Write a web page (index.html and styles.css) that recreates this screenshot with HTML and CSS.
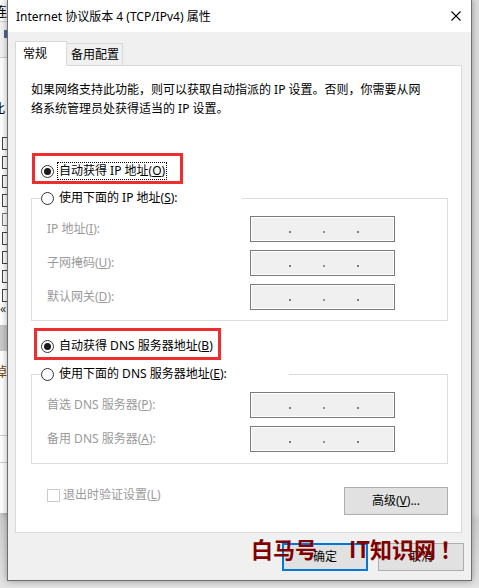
FILE: index.html
```html
<!DOCTYPE html>
<html lang="zh-CN">
<head>
<meta charset="utf-8">
<title>Internet 协议版本 4 (TCP/IPv4) 属性</title>
<link rel="stylesheet" href="styles.css">
</head>
<body>
<div class="bgwin">
  <div class="bg-head">连</div>
  <div class="bg-tool"><span class="bg-mark"></span></div>
  <div class="bg-text">此</div>
  <ul class="bg-list">
    <li></li><li></li><li></li><li></li><li class="empty"></li><li></li><li></li><li></li><li></li>
  </ul>
  <div class="bg-arrow">«</div>
  <div class="bg-block"></div>
  <div class="bg-glyph">掉</div>
  <div class="bg-line"></div>
  <div class="bg-line"></div>
</div>

<div class="dialog">
  <div class="titlebar">
    <span class="title">Internet 协议版本 4 (TCP/IPv4) 属性</span>
    <svg class="close" width="10" height="10" viewBox="0 0 10 10"><path d="M0.5 0.5 L9.5 9.5 M9.5 0.5 L0.5 9.5" stroke="#000" stroke-width="1.1" fill="none"/></svg>
  </div>
  <div class="body">
    <div class="tabs">
      <div class="tab active">常规</div>
      <div class="tab inactive">备用配置</div>
    </div>
    <div class="panel">
      <p class="desc">如果网络支持此功能，则可以获取自动指派的 IP 设置。否则，你需要从网<br>络系统管理员处获得适当的 IP 设置。</p>

      <div class="opt opt-first">
        <span class="radio checked"></span><span class="lbl focus">自动获得 IP 地址(<u>O</u>)</span>
        <span class="mark mark-ip"></span>
      </div>

      <fieldset class="group group-ip">
        <legend class="opt legend-ip"><span class="radio"></span><span class="lbl">使用下面的 IP 地址(<u>S</u>):</span></legend>
        <div class="rows">
          <div class="row"><span class="flabel">IP 地址(<u>I</u>):</span><span class="ipbox"><i></i><i></i><i></i></span></div>
          <div class="row"><span class="flabel">子网掩码(<u>U</u>):</span><span class="ipbox"><i></i><i></i><i></i></span></div>
          <div class="row"><span class="flabel">默认网关(<u>D</u>):</span><span class="ipbox"><i></i><i></i><i></i></span></div>
        </div>
      </fieldset>

      <div class="opt opt-dns">
        <span class="radio checked"></span><span class="lbl">自动获得 DNS 服务器地址(<u>B</u>)</span>
        <span class="mark mark-dns"></span>
      </div>

      <fieldset class="group group-dns">
        <legend class="opt legend-dns"><span class="radio"></span><span class="lbl">使用下面的 DNS 服务器地址(<u>E</u>):</span></legend>
        <div class="rows">
          <div class="row"><span class="flabel">首选 DNS 服务器(<u>P</u>):</span><span class="ipbox"><i></i><i></i><i></i></span></div>
          <div class="row"><span class="flabel">备用 DNS 服务器(<u>A</u>):</span><span class="ipbox"><i></i><i></i><i></i></span></div>
        </div>
      </fieldset>

      <div class="bottom">
        <label class="check"><span class="box"></span><span class="clbl">退出时验证设置(<u>L</u>)</span></label>
        <button class="btn adv">高级(<u>V</u>)...</button>
      </div>
    </div>
    <div class="actions">
      <button class="btn default">确定</button>
      <button class="btn">取消</button>
    </div>
  </div>
</div>

<div class="watermark"><span>白马号</span><span>IT知识网<span class="excl">！</span></span></div>
</body>
</html>
```

FILE: styles.css
```css
* { box-sizing: border-box; }

html, body {
  margin: 0;
  padding: 0;
}

body {
  width: 479px;
  height: 588px;
  position: relative;
  overflow: hidden;
  background: linear-gradient(to bottom, #dcdcdc 0, #dcdcdc 513px, #d0d0d0 520px, #e4e4e4 588px);
  font-family: "Noto Sans", "Noto Sans CJK SC", sans-serif;
  font-size: 12px;
  color: #000;
}

/* background window peeking on the left */
.bgwin {
  position: absolute;
  left: 0;
  top: 0;
  width: 60px;
  height: 513px;
  background: #fff;
  box-shadow: 0 2px 6px rgba(0,0,0,0.25);
  display: flex;
  flex-direction: column;
}
.bg-head {
  height: 22px;
  line-height: 22px;
  font-size: 13px;
  margin-left: -6px;
  border-bottom: 1px solid #d0d0d0;
  background: #fafafa;
}
.bg-tool {
  height: 36px;
  border-bottom: 1px solid #d0d0d0;
  background: #f3f3f3;
  padding-top: 8px;
}
.bg-mark {
  display: block;
  width: 3px;
  height: 8px;
  margin-left: 4px;
  background: #4a6a9a;
}
.bg-text {
  margin-top: 42px;
  margin-left: -8px;
  font-size: 13px;
  line-height: 16px;
}
.bg-list {
  list-style: none;
  margin: 21px 0 0 0;
  padding: 0;
  display: flex;
  flex-direction: column;
  gap: 6px;
}
.bg-list li {
  width: 8px;
  height: 13px;
  margin-left: 2px;
  border: 1px solid #444;
  border-right-width: 2px;
  background: #fff;
}
.bg-list li.empty { border-color: #777; }
.bg-arrow {
  font-size: 12px;
  line-height: 12px;
  margin-top: 1px;
  color: #333;
}
.bg-block {
  height: 26px;
  margin-top: 10px;
  background: #c9c9c9;
}
.bg-glyph {
  margin-top: 12px;
  margin-left: -6px;
  font-size: 13px;
  line-height: 16px;
  color: #7a4a10;
}
.bg-line {
  margin-top: 56px;
  border-top: 1px solid #cfcfcf;
}
.bg-line + .bg-line { margin-top: 26px; }

/* dialog window */
.dialog {
  position: absolute;
  left: 7px;
  top: -1px;
  width: 465px;
  height: 582px;
  border: 1px solid #6e6e6e;
  background: #f0f0f0;
  box-shadow: 0 0 7px rgba(0,0,0,0.35);
  display: flex;
  flex-direction: column;
}

.titlebar {
  height: 32px;
  padding-top: 1px;
  background: #fff;
  display: flex;
  align-items: center;
  justify-content: space-between;
  padding-left: 8px;
  padding-right: 10px;
}
.title {
  line-height: 31px;
}
.close { display: block; margin-top: -2px; }

.body {
  flex: 1;
  background: #f0f0f0;
  padding: 9px 9px 0 7px;
  display: flex;
  flex-direction: column;
}

.tabs {
  display: flex;
  height: 25px;
  margin-bottom: -1px;
  position: relative;
  z-index: 1;
}
.tab {
  border: 1px solid #d9d9d9;
  border-bottom: none;
  line-height: 22px;
}
.tab.active {
  width: 52px;
  height: 25px;
  background: #fff;
  padding-left: 7px;
  line-height: 23px;
}
.tab.inactive {
  width: 57px;
  height: 22px;
  margin-top: 2px;
  margin-left: -1px;
  background: #f0f0f0;
  padding-left: 4px;
}

.panel {
  width: 447px;
  height: 468px;
  border: 1px solid #d9d9d9;
  background: #fff;
  padding: 14px 13px 0 15px;
  display: flex;
  flex-direction: column;
}

.desc {
  margin: 0;
  line-height: 19px;
  height: 38px;
  white-space: nowrap;
}

.opt {
  display: flex;
  align-items: center;
  height: 20px;
  position: relative;
}
.opt-first { margin-top: 43px; padding-left: 10px; }
.opt-dns { margin-top: 15px; padding-left: 10px; }

.radio {
  width: 13px;
  height: 13px;
  border: 1px solid #333;
  border-radius: 50%;
  background: #fff;
  display: flex;
  align-items: center;
  justify-content: center;
  flex: none;
}
.radio.checked::after {
  content: "";
  width: 7px;
  height: 7px;
  border-radius: 50%;
  background: #1a1a1a;
}
.lbl {
  margin-left: 3px;
  padding: 0 1px;
  border: 1px dotted transparent;
  line-height: 16px;
  white-space: nowrap;
}
.lbl.focus { border-color: #000; }

.mark {
  position: absolute;
  border: 3px solid #ee2e2e;
  pointer-events: none;
}
.mark-ip { left: 1px; top: -8px; width: 151px; height: 31px; }
.mark-dns { left: 3px; top: -8px; width: 187px; height: 32px; }

.group {
  margin: 7px 0 0 0;
  padding: 0 0 10px 9px;
  border: 1px solid #dcdcdc;
  min-width: 0;
}
.group-dns { margin-top: 8px; padding-bottom: 11px; }
.group legend {
  padding: 0;
  background: #fff;
}
.legend-ip { width: 201px; }
.legend-dns { width: 248px; }

.rows {
  margin: 8px 0 0 6px;
  display: flex;
  flex-direction: column;
  gap: 8px;
}
.row {
  display: grid;
  grid-template-columns: 203px 145px;
  align-items: center;
  height: 26px;
}
.flabel {
  color: #9a9a9a;
  white-space: nowrap;
  line-height: 16px;
}
.ipbox {
  height: 26px;
  border: 1px solid #7a7a7a;
  box-shadow: inset 0 0 0 1px #fff;
  background: #f0f0f0;
  display: flex;
  align-items: flex-start;
  padding: 14px 0 0 38px;
  gap: 32px;
}
.ipbox i {
  display: block;
  width: 2px;
  height: 2px;
  background: #7d7d8a;
}
.ipbox i:nth-child(2) { background: #9a8f80; }

.bottom {
  margin-top: 21px;
  display: flex;
  justify-content: space-between;
  align-items: flex-start;
}
.check {
  display: flex;
  align-items: center;
  height: 20px;
  padding-left: 16px;
}
.check .box {
  width: 13px;
  height: 13px;
  border: 1px solid #cccccc;
  background: #fff;
}
.clbl {
  margin-left: 3px;
  color: #9a9a9a;
  line-height: 16px;
}

.btn {
  font-family: "Noto Sans", "Noto Sans CJK SC", sans-serif;
  font-size: 12px;
  color: #000;
  background: #e1e1e1;
  border: 1px solid #adadad;
  height: 28px;
  padding: 0;
  line-height: 24px;
}
.adv {
  width: 104px;
  margin-top: 2px;
}

.actions {
  margin-top: 10px;
  margin-right: -2px;
  display: flex;
  justify-content: flex-end;
  gap: 10px;
}
.actions .btn { width: 86px; }
.btn.default { border: 2px solid #0078d7; }

.watermark {
  position: absolute;
  left: 251px;
  top: 537px;
  display: flex;
  gap: 32px;
  font-family: "Noto Sans CJK SC", sans-serif;
  font-weight: 700;
  font-size: 22px;
  line-height: 22px;
  color: #800000;
  white-space: nowrap;
  pointer-events: none;
}
.excl { margin-left: 4px; }
```
